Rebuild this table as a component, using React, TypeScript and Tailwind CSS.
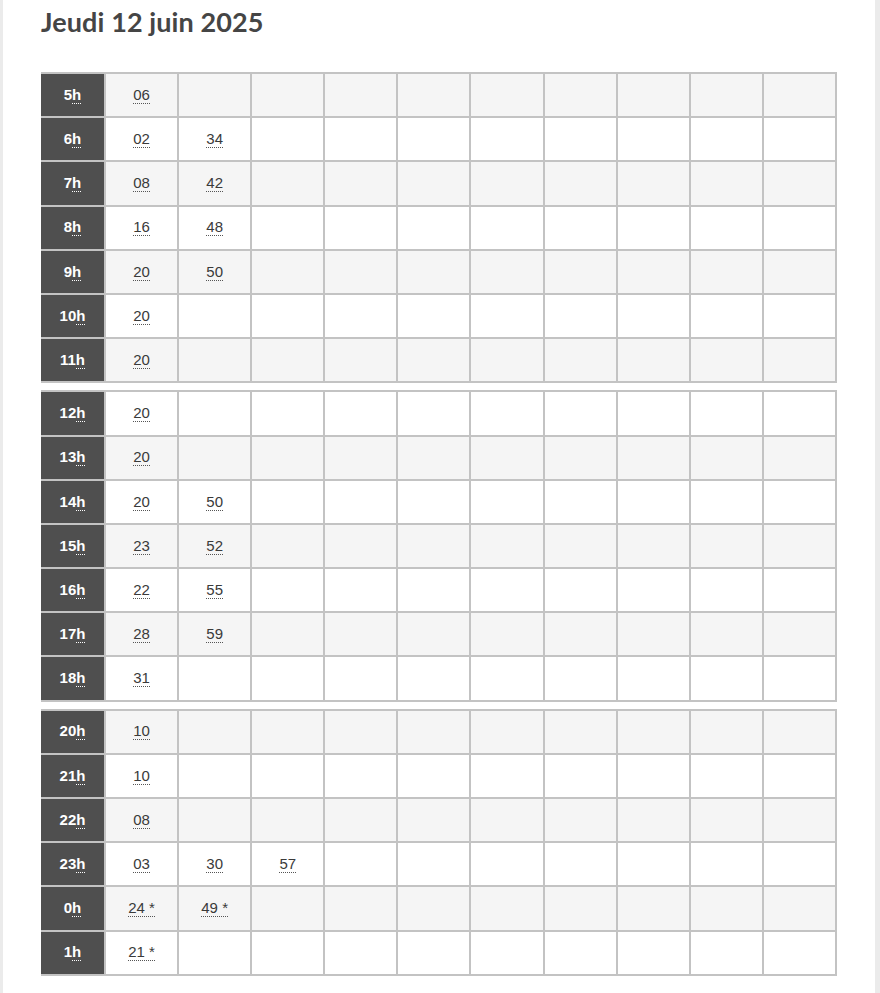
const tables: [string, string[]][][] = [
  [
    ["5", ["06"]],
    ["6", ["02", "34"]],
    ["7", ["08", "42"]],
    ["8", ["16", "48"]],
    ["9", ["20", "50"]],
    ["10", ["20"]],
    ["11", ["20"]],
  ],
  [
    ["12", ["20"]],
    ["13", ["20"]],
    ["14", ["20", "50"]],
    ["15", ["23", "52"]],
    ["16", ["22", "55"]],
    ["17", ["28", "59"]],
    ["18", ["31"]],
  ],
  [
    ["20", ["10"]],
    ["21", ["10"]],
    ["22", ["08"]],
    ["23", ["03", "30", "57"]],
    ["0", ["24 *", "49 *"]],
    ["1", ["21 *"]],
  ],
];

const COLS = 10;

function HourTable({ rows, offset }: { rows: [string, string[]][]; offset: number }) {
  return (
    <table className="w-[796px] table-fixed border-collapse border-2 border-[#c3c3c3] mb-[7px]">
      <colgroup>
        <col className="w-[63px]" />
        {Array.from({ length: COLS }).map((_, i) => (
          <col key={i} />
        ))}
      </colgroup>
      <tbody>
        {rows.map(([hour, mins], r) => {
          const grey = (offset + r) % 2 === 0;
          return (
            <tr key={hour} className={grey ? "bg-[#f5f5f5]" : "bg-white"}>
              <th className="h-[44.2px] pr-[2px] bg-[#4f4f4f] text-white text-[15px] font-bold text-center border-2 border-[#c3c3c3] border-l-[#4f4f4f]">
                {hour}
                <abbr className="no-underline border-b border-dotted border-white">h</abbr>
              </th>
              {Array.from({ length: COLS }).map((_, c) => (
                <td key={c} className="h-[44.2px] text-center text-[15px] text-[#3a3a3a] border-2 border-[#c3c3c3]">
                  {mins[c] && (
                    <abbr className="no-underline border-b border-dotted border-[#555]">{mins[c]}</abbr>
                  )}
                </td>
              ))}
            </tr>
          );
        })}
      </tbody>
    </table>
  );
}

export default function App() {
  let offset = 0;
  return (
    <div className="min-h-[993px] bg-[#ebebeb] pl-[3px] pr-[5px]" style={{ fontFamily: '"Liberation Sans", Arial, sans-serif' }}>
      <div className="min-h-[993px] bg-white pl-[38px] pt-[4px]">
        <h1
          className="text-[27px] leading-[36px] font-bold text-[#454545] tracking-[0.1px] mb-[32px]"
          style={{ fontFamily: 'Lato, "Open Sans", sans-serif' }}
        >
          Jeudi 12 juin 2025
        </h1>
        {tables.map((rows, i) => {
          const el = <HourTable key={i} rows={rows} offset={offset} />;
          offset += rows.length;
          return el;
        })}
      </div>
    </div>
  );
}
